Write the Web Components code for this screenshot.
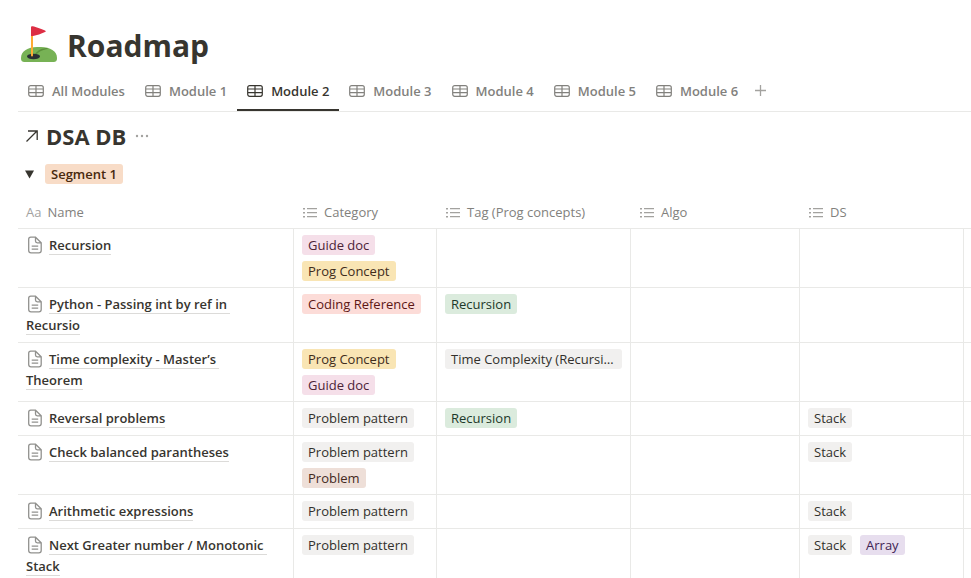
<!DOCTYPE html>
<html lang="en">
<head>
<meta charset="utf-8">
<meta name="viewport" content="width=device-width, initial-scale=1">
<title>Roadmap</title>
<style>
body {
  margin: 0;
  background: #fff;
  color: #37352f;
  font: 14px/21px "Open Sans", "Noto Sans", sans-serif;
  overflow-x: hidden;
}
main {
  padding: 23px 0 0 18px;
}
</style>
</head>
<body>

<main>
  <page-title>Roadmap</page-title>
  <view-tabs>
    <view-tab>All Modules</view-tab>
    <view-tab>Module 1</view-tab>
    <view-tab active>Module 2</view-tab>
    <view-tab>Module 3</view-tab>
    <view-tab>Module 4</view-tab>
    <view-tab>Module 5</view-tab>
    <view-tab>Module 6</view-tab>
  </view-tabs>
  <db-heading>DSA DB</db-heading>
  <table-group>
    <tag-pill slot="label" color="orange" strong>Segment 1</tag-pill>
    <data-table></data-table>
  </table-group>
</main>

<script>

function makeTemplate(html){
	const template = document.createElement('template');
	template.innerHTML = html;
	return template;
}

// base class, clones the template into an open shadow root
class BaseElement extends HTMLElement {
  constructor() {
    super();
    const shadowRoot = this.attachShadow({ mode: 'open' });
    shadowRoot.appendChild(this.constructor.template.content.cloneNode(true));
  }
}


//  ------------- page title --------------------

class PageTitle extends BaseElement {
  static template = makeTemplate(`
<style>
:host {
  display: flex;
  align-items: center;
  gap: 9px;
  height: 42px;
  padding: 0 0 2px 2px;
}
svg {
  flex: none;
}
h1 {
  margin: 4px 0 0;
  font-size: 30px;
  line-height: 40px;
  font-weight: 700;
}
</style>
<svg width="38" height="38" viewBox="0 0 38 38" aria-hidden="true">
  <path d="M1 33C1 26 8 22 17 22H21C30 22 37 26 37 33C37 36 36 37 33 37H5C2 37 1 36 1 33Z" fill="#77b255"/>
  <path d="M15 29C18 25 22 23 28 23L27 24C22 25 18 27 16 30Z" fill="#5c913b"/>
  <ellipse cx="13.500" cy="31.500" rx="6.500" ry="2.700" fill="#292f33"/>
  <rect x="11" y="3" width="2" height="28.500" rx="1" fill="#ffac33"/>
  <path d="M11 2C11 1 12 1 14 1.500C18 3 22 4 25 5.500C26 6 26 6.500 25 7C21 9 17 10 13 11H11Z" fill="#dd2e44"/>
</svg>
<h1><slot></slot></h1>
`);
}
customElements.define('page-title', PageTitle);


//  ------------- view tabs --------------------

class ViewTab extends BaseElement {
  static template = makeTemplate(`
<style>
:host {
  display: block;
  color: #82817d;
}
:host([active]) {
  color: #37352f;
}
button {
  display: flex;
  align-items: center;
  gap: 8px;
  height: 44px;
  padding: 6px 10px 0;
  border: 0;
  border-bottom: 2px solid transparent;
  background: none;
  color: inherit;
  font: inherit;
  font-size: 13px;
  font-weight: 600;
  white-space: nowrap;
  cursor: pointer;
}
:host([active]) button {
  border-bottom-color: #37352f;
}
</style>
<button type="button" role="tab">
  <svg width="16" height="14" viewBox="0 0 16 14" fill="none" stroke="currentColor" stroke-width="1.200" aria-hidden="true">
    <rect x=".7" y="1.700" width="14.600" height="10.600" rx="2"/>
    <path d="M1 5H15M1 8.700H15M8 2V12"/>
  </svg>
  <slot></slot>
</button>
`);
  connectedCallback() {
    this.shadowRoot.querySelector("button").setAttribute("aria-selected", this.hasAttribute("active"));
  }
}
customElements.define('view-tab', ViewTab);


class ViewTabs extends BaseElement {
  static template = makeTemplate(`
<style>
:host {
  display: flex;
  border-bottom: 1px solid #e9e9e7;
}
[role=tablist] {
  display: flex;
}
.add {
  padding: 2px 6px 0;
  border: 0;
  background: none;
  color: #a3a29f;
  cursor: pointer;
}
svg {
  display: block;
}
</style>
<div role="tablist"><slot></slot></div>
<button class="add" type="button" aria-label="Add view">
  <svg width="13" height="13" viewBox="0 0 13 13" stroke="currentColor" stroke-width="1.300"><path d="M6.500 1V12M1 6.500H12"/></svg>
</button>
`);
  connectedCallback() {
    this.addEventListener("click", (event) => {
      const tab = event.target.closest("view-tab");
      if(tab == null) return;
      this.querySelectorAll("view-tab").forEach((t) => {
        t.toggleAttribute("active", t === tab);
        t.connectedCallback();
      });
    });
  }
}
customElements.define('view-tabs', ViewTabs);


//  ------------- database heading --------------------

class DbHeading extends BaseElement {
  static template = makeTemplate(`
<style>
:host {
  display: flex;
  align-items: center;
  gap: 9px;
  padding: 8px 8px 10px;
}
h2 {
  margin: 0;
  font-size: 22px;
  line-height: 32px;
  font-weight: 700;
}
a {
  display: flex;
  align-items: center;
  gap: 8px;
  color: inherit;
  text-decoration: none;
}
button {
  padding: 0;
  border: 0;
  background: none;
  color: #a3a29f;
}
svg {
  display: block;
}
</style>
<h2><a href="#"><svg width="12" height="12" viewBox="0 0 12 12" fill="none" stroke="currentColor" stroke-width="1.300" aria-hidden="true"><path d="M.5 11.500L11 1M2 1H11.200V10"/></svg><slot></slot></a></h2>
<button type="button" aria-label="More">
  <svg width="14" height="4" viewBox="0 0 14 4" fill="currentColor"><circle cx="2" cy="2" r="1.200"/><circle cx="7" cy="2" r="1.200"/><circle cx="12" cy="2" r="1.200"/></svg>
</button>
`);
}
customElements.define('db-heading', DbHeading);


//  ------------- tag --------------------

class TagPill extends BaseElement {
  static template = makeTemplate(`
<style>
:host {
  display: block;
  box-sizing: border-box;
  max-width: 100%;
  height: 20px;
  padding: 0 6px;
  border-radius: 3px;
  background: #f1f0ef;
  color: #32302c;
  font-size: 13px;
  line-height: 20px;
  white-space: nowrap;
  overflow: hidden;
  text-overflow: ellipsis;
}
:host([strong]) { font-weight: 600; }
:host([color=orange]) { background: #f8dcc7; color: #49290e; }
:host([color=pink]) { background: #f5dfe9; color: #4c2337; }
:host([color=yellow]) { background: #f9e5b4; color: #402c1b; }
:host([color=red]) { background: #fcdcd8; color: #5d1715; }
:host([color=green]) { background: #dbebdd; color: #1c3829; }
:host([color=brown]) { background: #eedfd8; color: #442a1e; }
:host([color=purple]) { background: #e7deee; color: #412454; }
</style>
<slot></slot>
`);
}
customElements.define('tag-pill', TagPill);


//  ------------- link to a page --------------------

class PageLink extends BaseElement {
  static template = makeTemplate(`
<style>
:host {
  display: block;
  padding-right: 12px;
  font-size: 13px;
  font-weight: 600;
}
svg {
  margin-right: 5px;
  vertical-align: -4px;
  color: #91918e;
}
a {
  border-bottom: 1px solid #dcdbd9;
  color: inherit;
  text-decoration: none;
  white-space: pre-wrap;
}
</style>
<svg width="18" height="18" viewBox="0 0 18 18" fill="none" stroke="currentColor" stroke-width="1.300" aria-hidden="true"><path d="M4.700 1.200H9.500L15.200 6.800V14.500Q15.200 16.800 12.900 16.800H5Q2.700 16.800 2.700 14.500V3.200Q2.700 1.200 4.700 1.200ZM9.500 1.500V5Q9.500 6.800 11.300 6.800H15M5.700 10.200H12.200M5.700 13.200H12.200"/></svg><a href="#"><slot></slot></a>
`);
}
customElements.define('page-link', PageLink);


//  ------------- collapsible group --------------------

class TableGroup extends BaseElement {
  static template = makeTemplate(`
<style>
:host {
  display: block;
}
header {
  display: flex;
  align-items: center;
  gap: 11px;
  height: 24px;
  padding-left: 7px;
}
button {
  padding: 0;
  border: 0;
  background: none;
  color: #37352f;
  cursor: pointer;
}
svg {
  display: block;
}
.closed svg {
  transform: rotate(-90deg);
}
.closed + slot {
  display: none;
}
</style>
<header>
  <button type="button" aria-label="Toggle group"><svg width="9" height="9" viewBox="0 0 9 9" fill="currentColor"><path d="M0 .5H9L4.500 8.500Z"/></svg></button>
  <slot name="label"></slot>
</header>
<slot></slot>
`);
  connectedCallback() {
    const header = this.shadowRoot.querySelector("header");
    header.querySelector("button").onclick = () => header.classList.toggle("closed");
  }
}
customElements.define('table-group', TableGroup);


//  ------------- table --------------------

const tagColors = {
  "Guide doc": "pink",
  "Prog Concept": "yellow",
  "Coding Reference": "red",
  "Recursion": "green",
  "Problem": "brown",
  "Array": "purple"
};

// name, category, tag, algo, ds
const rows = [
  ["Recursion", ["Guide doc", "Prog Concept"], [], [], []],
  ["Python - Passing int by ref in Recursio", ["Coding Reference"], ["Recursion"], [], []],
  ["Time complexity - Master’s Theorem", ["Prog Concept", "Guide doc"], ["Time Complexity (Recursion)"], [], []],
  ["Reversal problems", ["Problem pattern"], ["Recursion"], [], ["Stack"]],
  ["Check balanced parantheses", ["Problem pattern", "Problem"], [], [], ["Stack"]],
  ["Arithmetic expressions", ["Problem pattern"], [], [], ["Stack"]],
  ["Next Greater number / Monotonic Stack", ["Problem pattern"], [], [], ["Stack", "Array"]]
];

const listIcon = `<svg width="14" height="12" viewBox="0 0 14 12" fill="currentColor" aria-hidden="true"><path d="M0 1H2V2.500H0ZM0 5H2V6.500H0ZM0 9H2V10.500H0ZM4 1H14V2.200H4ZM4 5H14V6.200H4ZM4 9H14V10.200H4Z"/></svg>`;

class DataTable extends BaseElement {
  static template = makeTemplate(`
<style>
:host {
  display: block;
}
table {
  width: 100%;
  table-layout: fixed;
  border-collapse: separate;
  border-spacing: 0;
}
.name { width: 276px; }
.category { width: 143px; }
.tag { width: 194px; }
.algo { width: 169px; }
.ds { width: 164px; }
th, td {
  box-sizing: border-box;
  padding: 6px 8px;
  border-bottom: 1px solid #e9e9e7;
  text-align: left;
  vertical-align: top;
}
td:not(:last-child) {
  border-right: 1px solid #e9e9e7;
}
th:last-child, td:last-child {
  padding: 0;
}
th {
  height: 43px;
  padding-bottom: 5px;
  vertical-align: bottom;
  color: #82817d;
  font-size: 13px;
  font-weight: 400;
}
.head {
  display: flex;
  align-items: center;
  gap: 7px;
  padding-left: 1px;
}
.name-head {
  gap: 6px;
  padding-left: 0;
}
.aa, .head svg {
  color: #a3a29f;
}
.tags {
  display: flex;
  flex-wrap: wrap;
  gap: 6px 8px;
}
</style>
<table>
  <colgroup>
    <col class="name"><col class="category"><col class="tag"><col class="algo"><col class="ds"><col>
  </colgroup>
  <thead>
    <tr>
      <th scope="col"><div class="head name-head"><span class="aa">Aa</span><span>Name</span></div></th>
      <th scope="col"><div class="head">${listIcon}<span>Category</span></div></th>
      <th scope="col"><div class="head">${listIcon}<span>Tag (Prog concepts)</span></div></th>
      <th scope="col"><div class="head">${listIcon}<span>Algo</span></div></th>
      <th scope="col"><div class="head">${listIcon}<span>DS</span></div></th>
      <th></th>
    </tr>
  </thead>
  <tbody></tbody>
</table>
`);
  connectedCallback() {
    const tbody = this.shadowRoot.querySelector("tbody");
    tbody.innerHTML = rows.map(([name, ...cells]) => `
      <tr>
        <td><page-link>${name}</page-link></td>
        ${cells.map((tags) => `<td><div class="tags">${tags.map((t) => `<tag-pill color="${tagColors[t] || "gray"}">${t}</tag-pill>`).join("")}</div></td>`).join("")}
        <td></td>
      </tr>`).join("");
  }
}
customElements.define('data-table', DataTable);

</script>
</body>
</html>
